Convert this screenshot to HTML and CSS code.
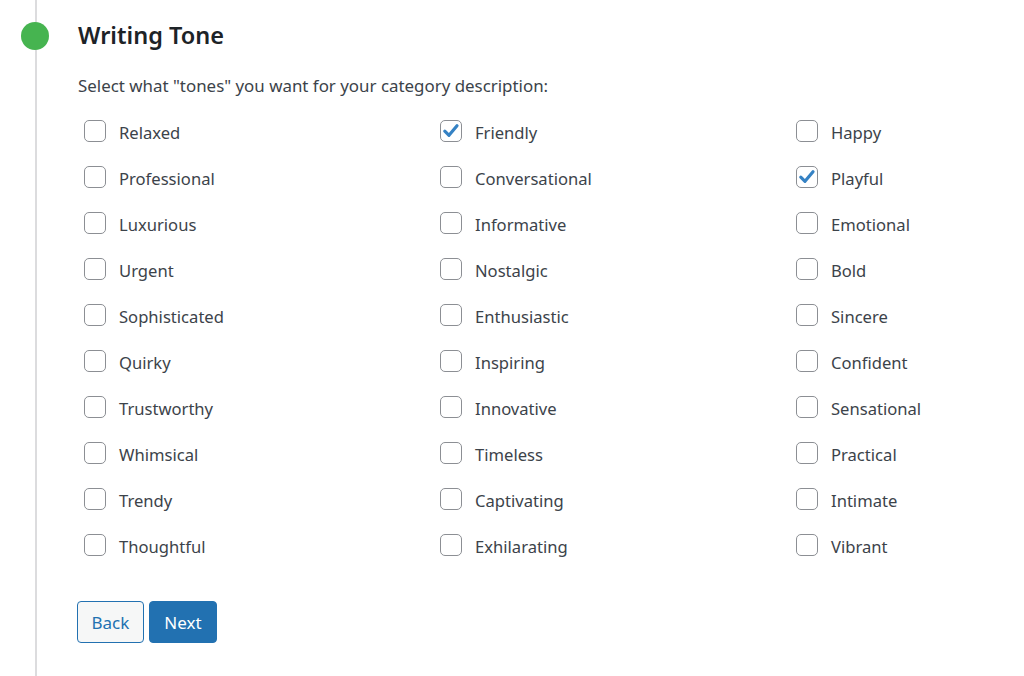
FILE: index.html
```html
<!DOCTYPE html>
<html>
<head>
  <meta charset="UTF-8"/>
  <title>Writing Tone</title>
  <link rel="stylesheet" href="styles.css">
</head>
<body>
  <div class="step">
    <span class="dot"></span>
    <h2>Writing Tone</h2>
    <p class="intro">Select what "tones" you want for your category description:</p>

    <div class="tones">
      <label><input type="checkbox"> Relaxed</label>
      <label><input type="checkbox" checked> Friendly</label>
      <label><input type="checkbox"> Happy</label>

      <label><input type="checkbox"> Professional</label>
      <label><input type="checkbox"> Conversational</label>
      <label><input type="checkbox" checked> Playful</label>

      <label><input type="checkbox"> Luxurious</label>
      <label><input type="checkbox"> Informative</label>
      <label><input type="checkbox"> Emotional</label>

      <label><input type="checkbox"> Urgent</label>
      <label><input type="checkbox"> Nostalgic</label>
      <label><input type="checkbox"> Bold</label>

      <label><input type="checkbox"> Sophisticated</label>
      <label><input type="checkbox"> Enthusiastic</label>
      <label><input type="checkbox"> Sincere</label>

      <label><input type="checkbox"> Quirky</label>
      <label><input type="checkbox"> Inspiring</label>
      <label><input type="checkbox"> Confident</label>

      <label><input type="checkbox"> Trustworthy</label>
      <label><input type="checkbox"> Innovative</label>
      <label><input type="checkbox"> Sensational</label>

      <label><input type="checkbox"> Whimsical</label>
      <label><input type="checkbox"> Timeless</label>
      <label><input type="checkbox"> Practical</label>

      <label><input type="checkbox"> Trendy</label>
      <label><input type="checkbox"> Captivating</label>
      <label><input type="checkbox"> Intimate</label>

      <label><input type="checkbox"> Thoughtful</label>
      <label><input type="checkbox"> Exhilarating</label>
      <label><input type="checkbox"> Vibrant</label>
    </div>

    <div class="actions">
      <button class="btn btn-back" type="button">Back</button>
      <button class="btn btn-next" type="button">Next</button>
    </div>
  </div>
</body>
</html>
```

FILE: styles.css
```css
body {
  margin: 0;
  background: #fff;
  font-family: "Noto Sans", "Open Sans", sans-serif;
  color: #3c434a;
  overflow: hidden;
}
.step {
  position: relative;
  margin-left: 35px;
  border-left: 2px solid #dcdcde;
  padding: 19px 0 0 41px;
  height: 657px;
}
.dot {
  position: absolute;
  left: -16px;
  top: 22px;
  width: 28px;
  height: 28px;
  border-radius: 50%;
  background: #46b450;
}
.step h2 {
  margin: 0;
  font-size: 23.5px;
  font-weight: 600;
  line-height: 32px;
  color: #1d2327;
}
.intro {
  margin: 23px 0 22px;
  font-size: 16.9px;
  line-height: 24px;
}
.tones {
  display: grid;
  grid-template-columns: 356px 356px 1fr;
  grid-auto-rows: 46px;
  margin-left: 6px;
}
.tones label {
  display: flex;
  align-items: center;
  font-size: 16.6px;
  height: 24px;
  cursor: pointer;
}
.tones input {
  appearance: none;
  -webkit-appearance: none;
  width: 22px;
  height: 22px;
  margin: -2px 13px 0 0;
  border: 1px solid #8c8f94;
  border-radius: 5px;
  background: #fff;
  box-sizing: border-box;
  flex: none;
}
.tones input:checked {
  background: #fff url("data:image/svg+xml;utf8,<svg xmlns='http://www.w3.org/2000/svg' viewBox='0 0 20 20'><path d='M3.8 10.2 L8 14.3 L16 4.8' fill='none' stroke='%233582c4' stroke-width='3.2' stroke-linecap='round' stroke-linejoin='round'/></svg>") center / 20px no-repeat;
}
.actions {
  display: flex;
  gap: 5px;
  margin-top: 21px;
  margin-left: -1px;
}
.btn {
  height: 42px;
  padding: 0 13.5px;
  border-radius: 4px;
  font-family: inherit;
  font-size: 17px;
  cursor: pointer;
}
.btn-back {
  background: #f6f7f7;
  border: 1px solid #2271b1;
  color: #2271b1;
}
.btn-next {
  background: #2271b1;
  border: 1px solid #2271b1;
  color: #fff;
  padding: 0 14.5px;
}
```
